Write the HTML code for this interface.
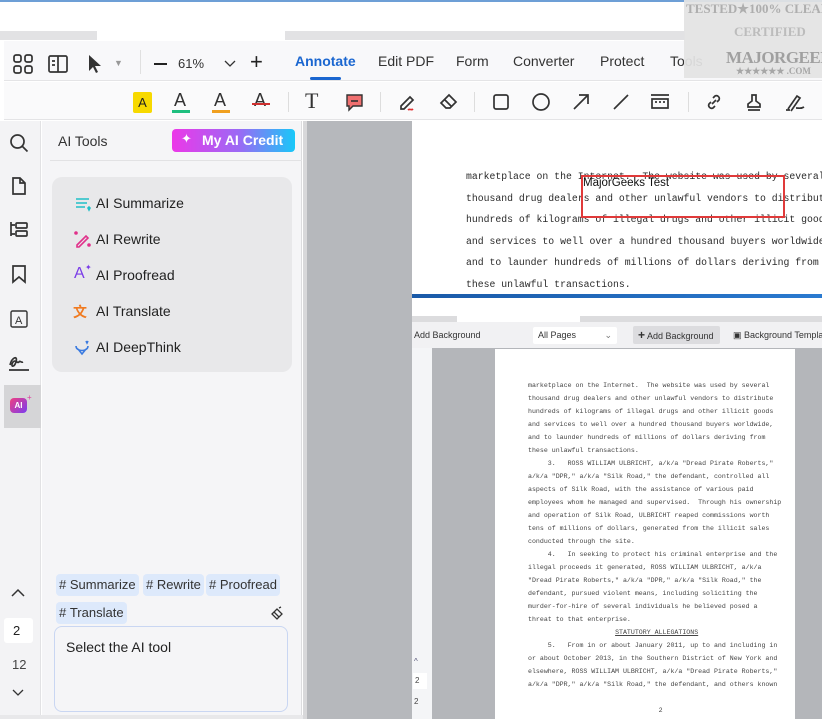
<!DOCTYPE html>
<html><head><meta charset="utf-8">
<style>
*{margin:0;padding:0;box-sizing:border-box}
html,body{width:822px;height:719px;overflow:hidden}
body{background:#fff;font-family:"Liberation Sans",sans-serif;position:relative;color:#222}
.a{position:absolute;white-space:nowrap}
.ic{position:absolute;stroke:#333;fill:none;stroke-width:1.7}
.tab{position:absolute;top:53px;font-size:14px;color:#333}
.mono{font-family:"Liberation Mono",monospace;white-space:pre;position:absolute;color:#333}
.tag{position:absolute;height:22px;background:#dde9fb;border-radius:4px;font-size:13px;line-height:22px;padding:0 3px;color:#333}
.item{position:absolute;left:96px;font-size:14px;color:#222}
.clip{position:absolute;overflow:hidden}
</style></head><body>
<div class="a" style="left:0;top:0;width:822px;height:2px;background:#6d9fd6"></div>
<div class="a" style="left:0;top:31px;width:97px;height:9px;background:#e2e2e4"></div>
<div class="a" style="left:285px;top:31px;width:400px;height:9px;background:#e2e2e4"></div>
<!-- toolbar row1 -->
<div class="a" style="left:4px;top:41px;width:818px;height:40px;background:#f8f8fa;border-bottom:1px solid #e4e4e6"></div>
<svg class="ic" style="left:13px;top:54px" width="20" height="20" viewBox="0 0 20 20"><rect x="1" y="1" width="7" height="7" rx="2"/><rect x="12" y="1" width="7" height="7" rx="2"/><rect x="1" y="12" width="7" height="7" rx="2"/><rect x="12" y="12" width="7" height="7" rx="2"/></svg>
<svg class="ic" style="left:48px;top:55px" width="20" height="18" viewBox="0 0 20 18"><rect x="1" y="1" width="18" height="16" rx="1.5"/><path d="M10 1v16M4 6h3M4 10h3"/></svg>
<svg class="a" style="left:87px;top:54px" width="16" height="20" viewBox="0 0 16 20"><path d="M2 1v16l4-4 3 6 2-1-3-6h6z" fill="#333"/></svg>
<div class="a" style="left:114px;top:58px;font-size:9px;color:#999">▼</div>
<div class="a" style="left:140px;top:50px;width:1px;height:24px;background:#e0e0e0"></div>
<div class="a" style="left:154px;top:63px;width:13px;height:2px;background:#222"></div>
<div class="a" style="left:178px;top:56px;font-size:13px;color:#333">61%</div>
<svg class="ic" style="left:224px;top:60px;stroke-width:1.3" width="12" height="8" viewBox="0 0 12 8"><path d="M1 1l5 5 5-5"/></svg>
<div class="a" style="left:250px;top:49px;font-size:22px;color:#222;font-weight:300">+</div>
<div class="tab" style="left:295px;color:#1a66d0;font-weight:bold">Annotate</div>
<div class="a" style="left:310px;top:77px;width:31px;height:3px;border-radius:2px;background:#1a66d0"></div>
<div class="tab" style="left:378px">Edit PDF</div>
<div class="tab" style="left:456px">Form</div>
<div class="tab" style="left:513px">Converter</div>
<div class="tab" style="left:600px">Protect</div>
<div class="tab" style="left:670px">Tools</div>
<!-- watermark -->
<div class="clip" style="left:684px;top:0;width:138px;height:78px;background:#e4e4e4;opacity:.93">
<div class="a" style="left:2px;top:1px;font-family:'Liberation Serif',serif;font-weight:bold;font-size:13px;color:#a8a8a8">TESTED★100% CLEAN</div>
<div class="a" style="left:50px;top:24px;font-family:'Liberation Serif',serif;font-weight:bold;font-size:13px;color:#b8b8b8">CERTIFIED</div>
<div class="a" style="left:42px;top:48px;font-family:'Liberation Serif',serif;font-weight:bold;font-size:17px;color:#9a9a9a;letter-spacing:-0.5px">MAJORGEEKS</div>
<div class="a" style="left:52px;top:66px;font-family:'Liberation Serif',serif;font-weight:bold;font-size:9px;color:#a0a0a0">★★★★★★ .COM</div>
</div>
<!-- row2 -->
<div class="a" style="left:4px;top:82px;width:818px;height:38px;background:#fafafb;border-bottom:1px solid #e4e4e6"></div>
<div class="a" style="left:133px;top:92px;width:19px;height:21px;background:#f7d900;border-radius:2px;font-size:13px;text-align:center;line-height:21px;color:#222">A</div>
<div class="a" style="left:174px;top:90px;font-size:18px;color:#333">A</div><div class="a" style="left:172px;top:110px;width:18px;height:3px;background:#1fbf7f"></div>
<div class="a" style="left:214px;top:90px;font-size:18px;color:#333">A</div><div class="a" style="left:212px;top:110px;width:18px;height:3px;background:#f0a020"></div>
<div class="a" style="left:254px;top:90px;font-size:18px;color:#333">A</div><div class="a" style="left:252px;top:103px;width:18px;height:2px;background:#d03030"></div>
<div class="a" style="left:288px;top:92px;width:1px;height:20px;background:#ddd"></div>
<div class="a" style="left:305px;top:88px;font-size:22px;font-family:'Liberation Serif',serif;color:#333">T</div>
<svg class="a" style="left:345px;top:93px" width="19" height="19" viewBox="0 0 19 19"><path d="M2 2h15v11h-9l-4 4v-4H2z" fill="#f07070" stroke="#333" stroke-width="1.4"/><path d="M6 8h7" stroke="#333" stroke-width="1.6"/></svg>
<div class="a" style="left:380px;top:92px;width:1px;height:20px;background:#ddd"></div>
<svg class="ic" style="left:398px;top:92px" width="20" height="20" viewBox="0 0 20 20"><path d="M3 14l9-9 3 3-9 9H3z"/><path d="M10 18c2-2 3 1 5-1" stroke="#e03030"/></svg>
<svg class="ic" style="left:439px;top:92px" width="20" height="20" viewBox="0 0 20 20"><path d="M2 11l8-8 7 7-6 6H7z M6 8l7 7"/></svg>
<div class="a" style="left:474px;top:92px;width:1px;height:20px;background:#ddd"></div>
<svg class="ic" style="left:492px;top:93px" width="18" height="18"><rect x="2" y="2" width="14" height="14" rx="2"/></svg>
<svg class="ic" style="left:531px;top:92px" width="20" height="20"><circle cx="10" cy="10" r="8"/></svg>
<svg class="ic" style="left:571px;top:92px" width="20" height="20"><path d="M3 17L17 3M8 3h9v9"/></svg>
<svg class="ic" style="left:611px;top:92px" width="20" height="20"><path d="M3 17L17 3"/></svg>
<svg class="ic" style="left:650px;top:92px" width="20" height="20"><path d="M1 3h18M2 7h16v9H2z M6 11v-2M10 11v-2M14 11v-2"/></svg>
<div class="a" style="left:688px;top:92px;width:1px;height:20px;background:#ddd"></div>
<svg class="ic" style="left:704px;top:92px" width="20" height="20"><path d="M8 12l4-4M9 6l2-2a3 3 0 014 4l-2 2M11 14l-2 2a3 3 0 01-4-4l2-2"/></svg>
<svg class="ic" style="left:744px;top:92px" width="20" height="20"><path d="M8 3h4v6l4 3v3H4v-3l4-3z M4 18h12"/></svg>
<svg class="ic" style="left:784px;top:92px" width="22" height="20"><path d="M4 17l9-13 3 2-9 13M2 18h4M12 16c3 0 5 1 8-1"/></svg>
<!-- left icon bar -->
<div class="a" style="left:0;top:121px;width:41px;height:598px;background:#f3f3f5;border-right:1px solid #e2e2e4"></div>
<svg class="ic" style="left:9px;top:133px" width="20" height="20"><circle cx="8.5" cy="8.5" r="6.5"/><path d="M13.5 13.5l5 5"/></svg>
<svg class="ic" style="left:10px;top:176px" width="18" height="20"><path d="M3 2h7l5 5v11H3z M10 2v5h5"/></svg>
<svg class="ic" style="left:9px;top:220px" width="20" height="20"><path d="M2 2v14M2 5h4M2 14h4"/><rect x="7" y="3" width="11" height="5" rx="1"/><rect x="7" y="11" width="11" height="5" rx="1"/></svg>
<svg class="ic" style="left:11px;top:264px" width="16" height="20"><path d="M2 2h12v16l-6-5-6 5z"/></svg>
<svg class="ic" style="left:9px;top:309px;stroke-width:1.4" width="20" height="20"><rect x="2" y="2" width="16" height="16" rx="1.5"/><text x="6" y="15" font-size="11" fill="#333" stroke="none" font-family="Liberation Sans">A</text></svg>
<svg class="ic" style="left:7px;top:352px" width="24" height="20"><path d="M3 13c2-8 8-10 6-3-2 6-6 5-3 0 3-3 4 2 6 0 1-2 2 1 4 0M2 18h20"/></svg>
<div class="a" style="left:4px;top:385px;width:37px;height:43px;background:#d5d5d7"></div>
<div class="a" style="left:10px;top:398px;width:17px;height:15px;border-radius:4px;background:linear-gradient(135deg,#f04080,#7a3cf0);color:#fff;font-size:8px;font-weight:bold;text-align:center;line-height:15px">AI</div>
<div class="a" style="left:27px;top:393px;color:#e040a0;font-size:8px">+</div>
<svg class="ic" style="left:11px;top:588px;stroke-width:1.5" width="14" height="9"><path d="M1 8l6-6 6 6"/></svg>
<div class="a" style="left:4px;top:618px;width:29px;height:25px;background:#fff;border-radius:3px;font-size:13px;line-height:25px;padding-left:9px">2</div>
<div class="a" style="left:12px;top:657px;font-size:13px;color:#444">12</div>
<svg class="ic" style="left:12px;top:689px;stroke-width:1.3" width="12" height="7"><path d="M1 1l5 5 5-5"/></svg>
<!-- panel -->
<div class="a" style="left:42px;top:121px;width:260px;height:598px;background:#f5f5f7;border-right:1px solid #dcdcde"></div>
<div class="a" style="left:58px;top:133px;font-size:14px;color:#333">AI Tools</div>
<div class="a" style="left:172px;top:129px;width:123px;height:23px;border-radius:4px;background:linear-gradient(90deg,#ec38e8,#9a6af5 55%,#18c8f8);color:#fff;font-size:14px;font-weight:bold;line-height:23px;padding-left:30px">My AI Credit</div>
<div class="a" style="left:181px;top:131px;color:#fff;font-size:13px">✦</div>
<div class="a" style="left:50px;top:160px;width:252px;height:1px;background:#e2e2e4"></div>
<div class="a" style="left:52px;top:177px;width:240px;height:195px;background:#e8e8ea;border-radius:10px"></div>
<svg class="a" style="left:72px;top:193px" width="20" height="20" fill="none" stroke="#20c0c8" stroke-width="1.6"><path d="M4 6h13M4 10h11M4 14h9"/><path d="M16 15l1 2 1-2-1-1z" fill="#20c0c8"/></svg>
<div class="item" style="top:195px">AI Summarize</div>
<svg class="a" style="left:72px;top:229px" width="20" height="20" fill="none" stroke="#e0308a" stroke-width="1.6"><path d="M5 16l9-9 2 2-9 9H5z"/><circle cx="4" cy="4" r="1" fill="#e0308a"/><circle cx="17" cy="16" r="1" fill="#e0308a"/></svg>
<div class="item" style="top:231px">AI Rewrite</div>
<div class="a" style="left:74px;top:265px;color:#7a3ce8;font-size:16px">A</div><div class="a" style="left:85px;top:263px;color:#7a3ce8;font-size:8px">✦</div>
<div class="item" style="top:267px">AI Proofread</div>
<div class="a" style="left:73px;top:302px;color:#f07a20;font-size:14px;font-weight:bold;font-family:'Liberation Sans','Noto Sans CJK SC',sans-serif">文</div>
<div class="item" style="top:303px">AI Translate</div>
<svg class="a" style="left:72px;top:337px" width="20" height="20" fill="none" stroke="#3a7ae0" stroke-width="1.6"><path d="M4 9c0 6 12 6 12 0M6 12l4 5 4-5"/><path d="M14 4l1 2 1-2" /></svg>
<div class="item" style="top:339px">AI DeepThink</div>
<div class="tag" style="left:56px;top:574px">#&nbsp;Summarize</div>
<div class="tag" style="left:143px;top:574px">#&nbsp;Rewrite</div>
<div class="tag" style="left:206px;top:574px">#&nbsp;Proofread</div>
<div class="tag" style="left:56px;top:602px">#&nbsp;Translate</div>
<svg class="ic" style="left:270px;top:606px;stroke-width:1.3" width="14" height="14"><path d="M2 8l5-5 5 5-5 5z M4 6l5 5M9 2l2-1"/></svg>
<div class="a" style="left:54px;top:626px;width:234px;height:86px;border:1px solid #c9d6f2;border-radius:8px;background:#f5f5f7;padding:12px 11px;font-size:14px;color:#222">Select the AI tool</div>
<div class="a" style="left:0;top:715px;width:412px;height:4px;background:#e8e8ea"></div>
<!-- doc area -->
<div class="a" style="left:303px;top:121px;width:109px;height:598px;background:#b6b8bc;border-left:4px solid #d8d8da"></div>
<div class="clip" style="left:412px;top:121px;width:410px;height:174px;background:#fff">
<div class="mono" style="left:54px;top:45px;font-size:9.8px;line-height:21.6px;color:#2a2a2a">marketplace on the Internet.  The website was used by several
thousand drug dealers and other unlawful vendors to distribute
hundreds of kilograms of illegal drugs and other illicit goods
and services to well over a hundred thousand buyers worldwide,
and to launder hundreds of millions of dollars deriving from
these unlawful transactions.</div>
<div class="a" style="left:169px;top:54px;width:204px;height:43px;border:2px solid #e03a3a"></div>
<div class="a" style="left:171px;top:56px;font-size:11.5px;color:#111">MajorGeeks Test</div>
</div>
<div class="a" style="left:412px;top:294px;width:410px;height:4px;background:linear-gradient(90deg,#1a5aa8,#2a7ad0)"></div>
<!-- embedded -->
<div class="clip" style="left:412px;top:298px;width:410px;height:421px;background:#fff">
<div class="a" style="left:0;top:18px;width:45px;height:6px;background:#dcdcde"></div>
<div class="a" style="left:168px;top:18px;width:242px;height:6px;background:#dcdcde"></div>
<div class="a" style="left:0;top:24px;width:410px;height:26px;background:#f1f1f3"></div>
<div class="a" style="left:2px;top:32px;font-size:9px;color:#333">Add Background</div>
<div class="a" style="left:121px;top:29px;width:84px;height:17px;background:#fff;border-radius:2px;font-size:9px;line-height:17px;padding-left:5px;color:#333">All Pages<span style="position:absolute;right:5px;color:#777">⌄</span></div>
<div class="a" style="left:221px;top:28px;width:87px;height:18px;background:#dcdcdf;border-radius:2px;font-size:9px;line-height:18px;padding-left:5px;color:#333"><b style="font-size:12px">+</b> Add Background</div>
<div class="a" style="left:321px;top:32px;font-size:9px;color:#333">▣ Background Templat</div>
<div class="a" style="left:0;top:50px;width:20px;height:371px;background:#f4f5f7"></div>
<div class="a" style="left:20px;top:50px;width:390px;height:371px;background:#b4b6ba"></div>
<div class="a" style="left:83px;top:51px;width:300px;height:370px;background:#fff"></div>
<div class="a" style="left:2px;top:359px;font-size:8px;color:#557">^</div>
<div class="a" style="left:1px;top:375px;width:14px;height:16px;background:#fff;font-size:8px;padding:3px 2px;color:#444">2</div>
<div class="a" style="left:2px;top:399px;font-size:8px;color:#444">2</div>
<div class="mono" style="left:116px;top:81px;font-size:6.6px;line-height:13px;color:#444">marketplace on the Internet.  The website was used by several
thousand drug dealers and other unlawful vendors to distribute
hundreds of kilograms of illegal drugs and other illicit goods
and services to well over a hundred thousand buyers worldwide,
and to launder hundreds of millions of dollars deriving from
these unlawful transactions.
     3.   ROSS WILLIAM ULBRICHT, a/k/a "Dread Pirate Roberts,"
a/k/a "DPR," a/k/a "Silk Road," the defendant, controlled all
aspects of Silk Road, with the assistance of various paid
employees whom he managed and supervised.  Through his ownership
and operation of Silk Road, ULBRICHT reaped commissions worth
tens of millions of dollars, generated from the illicit sales
conducted through the site.
     4.   In seeking to protect his criminal enterprise and the
illegal proceeds it generated, ROSS WILLIAM ULBRICHT, a/k/a
"Dread Pirate Roberts," a/k/a "DPR," a/k/a "Silk Road," the
defendant, pursued violent means, including soliciting the
murder-for-hire of several individuals he believed posed a
threat to that enterprise.
                      <u>STATUTORY ALLEGATIONS</u>
     5.   From in or about January 2011, up to and including in
or about October 2013, in the Southern District of New York and
elsewhere, ROSS WILLIAM ULBRICHT, a/k/a "Dread Pirate Roberts,"
a/k/a "DPR," a/k/a "Silk Road," the defendant, and others known

                                 2</div>
</div>
</body></html>
